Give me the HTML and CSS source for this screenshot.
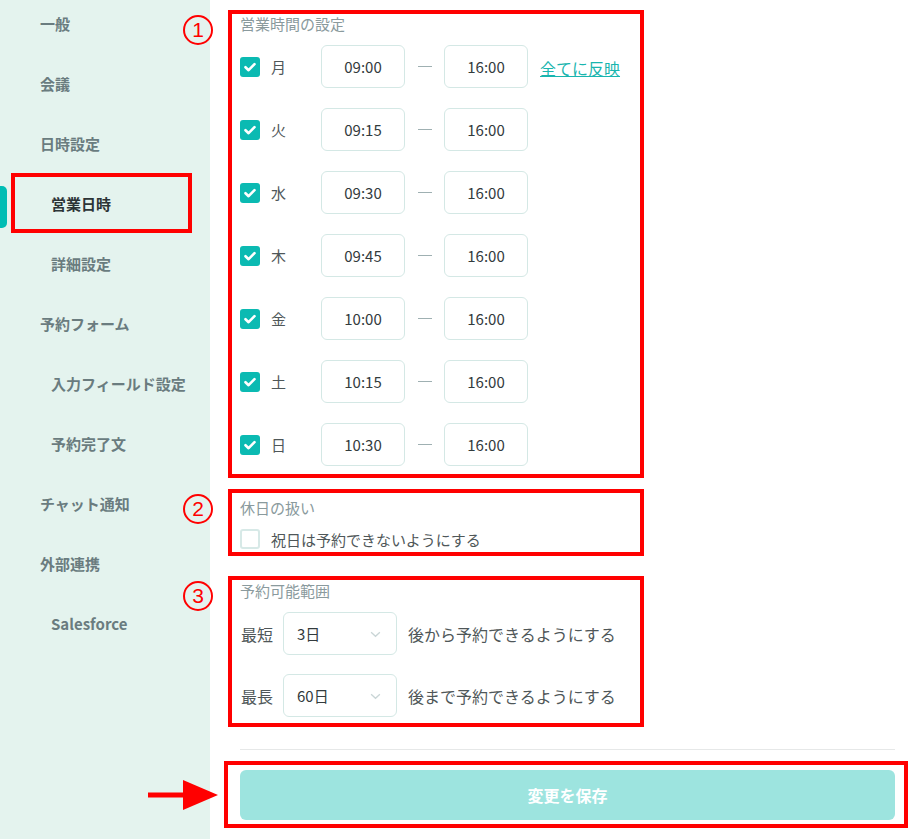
FILE: index.html
```html
<!DOCTYPE html>
<html lang="ja">
<head>
    <meta charset="UTF-8">
    <meta name="viewport" content="width=device-width, initial-scale=1.0">
    <title>営業日時</title>
    <link rel="stylesheet" href="styles.css">
</head>
<body>
<div class="layout">
    <nav class="sidebar">
        <div class="nav-list">
            <a class="nav-item">一般</a>
            <a class="nav-item">会議</a>
            <a class="nav-item">日時設定</a>
            <a class="nav-item sub active">営業日時</a>
            <a class="nav-item sub">詳細設定</a>
            <a class="nav-item">予約フォーム</a>
            <a class="nav-item sub">入力フィールド設定</a>
            <a class="nav-item sub">予約完了文</a>
            <a class="nav-item">チャット通知</a>
            <a class="nav-item">外部連携</a>
            <a class="nav-item sub">Salesforce</a>
        </div>
    </nav>

    <main class="content">
        <section class="block block-hours">
            <span class="marker">1</span>
            <h2 class="block-title">営業時間の設定</h2>
            <div class="day-rows">
                <div class="day-row">
                    <span class="check on"><svg viewBox="0 0 20 20"><path d="M5.5 10.2 L8.6 13.2 L14.5 7.2"/></svg></span>
                    <span class="day-label">月</span>
                    <span class="time-box">09:00</span>
                    <span class="dash"></span>
                    <span class="time-box">16:00</span>
                    <a class="apply-all">全てに反映</a>
                </div>
                <div class="day-row">
                    <span class="check on"><svg viewBox="0 0 20 20"><path d="M5.5 10.2 L8.6 13.2 L14.5 7.2"/></svg></span>
                    <span class="day-label">火</span>
                    <span class="time-box">09:15</span>
                    <span class="dash"></span>
                    <span class="time-box">16:00</span>
                </div>
                <div class="day-row">
                    <span class="check on"><svg viewBox="0 0 20 20"><path d="M5.5 10.2 L8.6 13.2 L14.5 7.2"/></svg></span>
                    <span class="day-label">水</span>
                    <span class="time-box">09:30</span>
                    <span class="dash"></span>
                    <span class="time-box">16:00</span>
                </div>
                <div class="day-row">
                    <span class="check on"><svg viewBox="0 0 20 20"><path d="M5.5 10.2 L8.6 13.2 L14.5 7.2"/></svg></span>
                    <span class="day-label">木</span>
                    <span class="time-box">09:45</span>
                    <span class="dash"></span>
                    <span class="time-box">16:00</span>
                </div>
                <div class="day-row">
                    <span class="check on"><svg viewBox="0 0 20 20"><path d="M5.5 10.2 L8.6 13.2 L14.5 7.2"/></svg></span>
                    <span class="day-label">金</span>
                    <span class="time-box">10:00</span>
                    <span class="dash"></span>
                    <span class="time-box">16:00</span>
                </div>
                <div class="day-row">
                    <span class="check on"><svg viewBox="0 0 20 20"><path d="M5.5 10.2 L8.6 13.2 L14.5 7.2"/></svg></span>
                    <span class="day-label">土</span>
                    <span class="time-box">10:15</span>
                    <span class="dash"></span>
                    <span class="time-box">16:00</span>
                </div>
                <div class="day-row">
                    <span class="check on"><svg viewBox="0 0 20 20"><path d="M5.5 10.2 L8.6 13.2 L14.5 7.2"/></svg></span>
                    <span class="day-label">日</span>
                    <span class="time-box">10:30</span>
                    <span class="dash"></span>
                    <span class="time-box">16:00</span>
                </div>
            </div>
        </section>

        <section class="block block-holiday">
            <span class="marker">2</span>
            <h2 class="block-title">休日の扱い</h2>
            <label class="holiday-row">
                <span class="check"></span>
                <span>祝日は予約できないようにする</span>
            </label>
        </section>

        <section class="block block-range">
            <span class="marker">3</span>
            <h2 class="block-title">予約可能範囲</h2>
            <div class="range-rows">
                <div class="range-row">
                    <span class="range-label">最短</span>
                    <span class="select-box">3日<svg viewBox="0 0 12 8"><path d="M1 1.5 L6 6 L11 1.5"/></svg></span>
                    <span>後から予約できるようにする</span>
                </div>
                <div class="range-row">
                    <span class="range-label">最長</span>
                    <span class="select-box">60日<svg viewBox="0 0 12 8"><path d="M1 1.5 L6 6 L11 1.5"/></svg></span>
                    <span>後まで予約できるようにする</span>
                </div>
            </div>
        </section>

        <hr class="divider">

        <div class="save-wrap">
            <svg class="arrow" viewBox="0 0 70 30"><line x1="0" y1="15" x2="38" y2="15"/><polygon points="35,0 70,15 35,30"/></svg>
            <button class="save-btn">変更を保存</button>
        </div>
    </main>
</div>
</body>
</html>
```

FILE: styles.css
```css
body {
    margin: 0;
    font-family: "Noto Sans CJK JP", "Noto Sans", sans-serif;
    color: #4a5052;
    background: #fff;
}
.layout {
    display: flex;
    min-height: 100vh;
}

/* sidebar */
.sidebar {
    width: 210px;
    flex-shrink: 0;
    background-color: #e4f3ee;
}
.nav-list {
    margin-top: -7px;
}
.nav-item {
    position: relative;
    display: flex;
    align-items: center;
    height: 60px;
    padding-left: 40px;
    font-size: 15px;
    font-weight: bold;
    color: #6a7c7f;
    cursor: pointer;
}
.nav-item.sub {
    padding-left: 51px;
}
.nav-item.active {
    color: #2c3436;
}
.nav-item.active::before {
    content: "";
    position: absolute;
    left: 0;
    top: 13px;
    width: 7px;
    height: 42px;
    border-radius: 0 5px 5px 0;
    background-color: #00bdb4;
}
.nav-item.active::after {
    content: "";
    position: absolute;
    left: 11px;
    top: 0;
    width: 181px;
    height: 60px;
    box-sizing: border-box;
    border: 4px solid #ff0000;
}

/* main */
.content {
    flex: 1;
    padding: 10px 26px 0 30px;
}
.block {
    position: relative;
    width: 416px;
    box-sizing: border-box;
    margin-left: -12px;
    border: 4px solid #ff0000;
    padding: 0 8px 8px 8px;
}
.marker {
    position: absolute;
    left: -49px;
    top: 1px;
    width: 30px;
    height: 30px;
    box-sizing: border-box;
    border: 2px solid #ff0000;
    border-radius: 50%;
    display: flex;
    align-items: center;
    justify-content: center;
    font-family: "Liberation Sans", sans-serif;
    font-size: 21px;
    color: #ff0000;
}
.block-title {
    margin: 0;
    font-size: 15px;
    font-weight: normal;
    line-height: 20px;
    color: #8a9a9d;
}

.day-rows {
    display: flex;
    flex-direction: column;
    gap: 20px;
    margin-top: 11px;
}
.day-row {
    display: flex;
    align-items: center;
    height: 43px;
    font-size: 15px;
}
.check {
    width: 20px;
    height: 20px;
    box-sizing: border-box;
    border: 2px solid #d7e9e7;
    border-radius: 3px;
    background: #fff;
    margin-right: 11px;
    flex-shrink: 0;
}
.check.on {
    border: none;
    background-color: #0bbab2;
}
.check svg {
    display: block;
    width: 20px;
    height: 20px;
    fill: none;
    stroke: #fff;
    stroke-width: 2.6;
    stroke-linecap: round;
    stroke-linejoin: round;
}
.day-label {
    width: 50px;
    color: #4f5759;
}
.time-box {
    width: 84px;
    height: 43px;
    box-sizing: border-box;
    border: 1px solid #d4e8e5;
    border-radius: 6px;
    display: flex;
    align-items: center;
    justify-content: center;
    color: #333b3d;
}
.dash {
    width: 14px;
    height: 1px;
    margin: 0 12px 0 13px;
    background-color: #9fb0b2;
}
.apply-all {
    margin: 3px 0 0 12px;
    font-size: 16px;
    color: #19b5ae;
    text-decoration: underline;
    cursor: pointer;
}

.block-holiday {
    margin-top: 11px;
    padding-top: 5px;
    padding-bottom: 2px;
}
.holiday-row {
    display: flex;
    align-items: center;
    height: 22px;
    margin-top: 10px;
    font-size: 15px;
    color: #4f5759;
}

.block-range {
    margin-top: 20px;
    padding-top: 1px;
    padding-bottom: 6px;
}
.range-rows {
    display: flex;
    flex-direction: column;
    gap: 19px;
    margin-top: 11px;
}
.range-row {
    display: flex;
    align-items: center;
    height: 43px;
    font-size: 16px;
    color: #4f5759;
}
.range-label {
    width: 32px;
    margin: 0 10px 0 1px;
}
.select-box {
    position: relative;
    width: 114px;
    height: 43px;
    box-sizing: border-box;
    border: 1px solid #d4e8e5;
    border-radius: 6px;
    display: flex;
    align-items: center;
    padding-left: 13px;
    margin-right: 11px;
    font-size: 15px;
    color: #333b3d;
}
.select-box svg {
    position: absolute;
    right: 15px;
    top: 18px;
    width: 11px;
    height: 7px;
    fill: none;
    stroke: #c9d5d6;
    stroke-width: 1.5;
}

.divider {
    margin: 22px 0 0 0;
    border: none;
    border-top: 1px solid #e6e8e8;
}
.save-wrap {
    position: relative;
    margin: 11px -13px 0 -16px;
    border: 4px solid #ff0000;
    padding: 5px 9px 4px 12px;
}
.arrow {
    position: absolute;
    left: -80px;
    top: 15px;
    width: 70px;
    height: 30px;
}
.arrow line {
    stroke: #ff0000;
    stroke-width: 5;
}
.arrow polygon {
    fill: #ff0000;
}
.save-btn {
    display: block;
    width: 100%;
    height: 50px;
    border: none;
    border-radius: 6px;
    background-color: #9de4df;
    color: #fff;
    font-family: inherit;
    font-size: 16px;
    font-weight: bold;
}
```
